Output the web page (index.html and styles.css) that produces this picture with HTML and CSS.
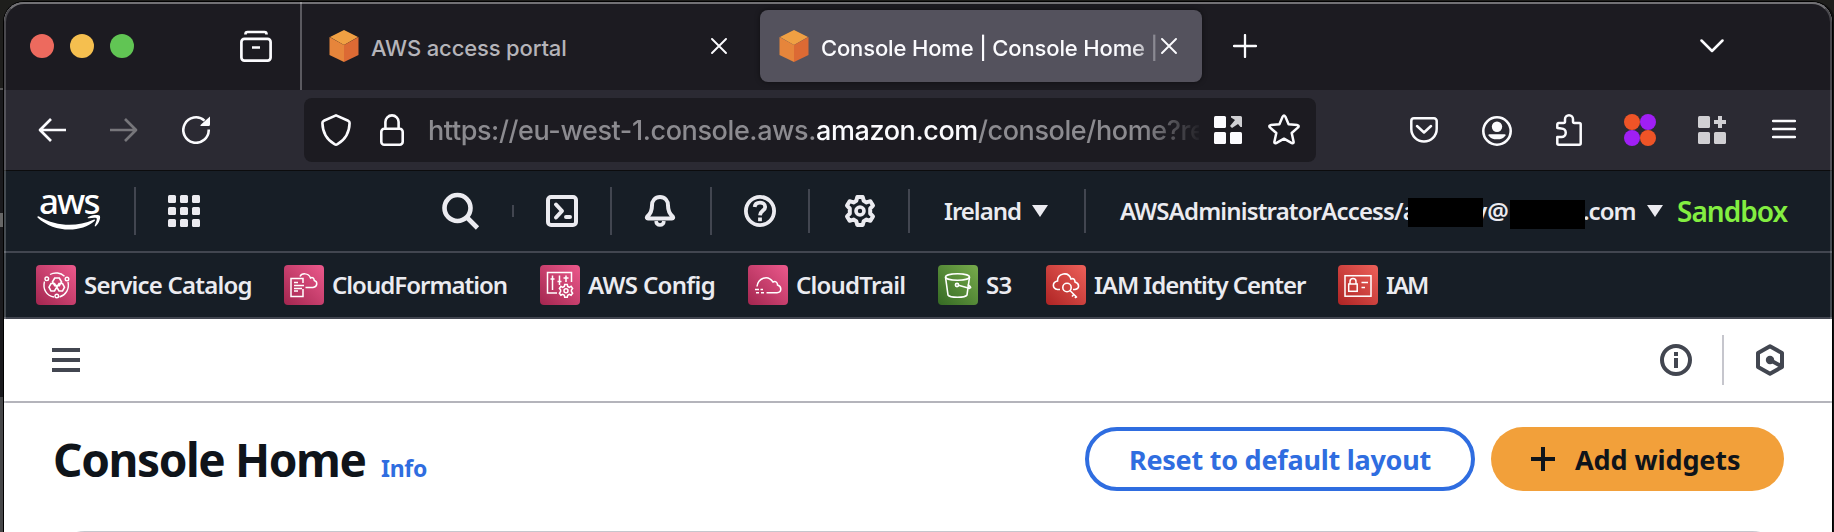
FILE: index.html
```html
<!DOCTYPE html>
<html lang="en">
<head>
<meta charset="utf-8">
<title>Console Home</title>
<link rel="stylesheet" href="styles.css">
</head>
<body>
<svg width="0" height="0" class="defs">
  <defs>
    <linearGradient id="pink" x1="0" y1="1" x2="1" y2="0"><stop offset="0" stop-color="#a3264f"/><stop offset="1" stop-color="#ec598c"/></linearGradient>
    <linearGradient id="green" x1="0" y1="1" x2="1" y2="0"><stop offset="0" stop-color="#356a24"/><stop offset="1" stop-color="#77ab4c"/></linearGradient>
    <linearGradient id="red" x1="0" y1="1" x2="1" y2="0"><stop offset="0" stop-color="#ae2424"/><stop offset="1" stop-color="#ed6059"/></linearGradient>
    <symbol id="cube" viewBox="0 0 32 32"><path fill="#f0a043" d="M16 0l14 7-14 8L2 7z"/><path fill="#e6853b" d="M1.500 7L16 15v17L1.500 25z"/><path fill="#dc6a34" d="M30.500 7L16 15v17l14.500-7z"/></symbol>
  </defs>
</svg>
<div class="desktop"></div>
<div class="window">
  <div class="tabbar">
    <div class="lights"><i class="light close"></i><i class="light min"></i><i class="light max"></i></div>
    <svg class="archive" width="32" height="32" viewBox="0 0 32 32" fill="none" stroke="#fbfbfe" stroke-width="2.700"><path d="M5.500 4.500V4a2 2 0 0 1 2-2h17a2 2 0 0 1 2 2v.5"/><rect x="1.400" y="8.900" width="29.200" height="21.700" rx="3"/><path d="M12 17.500h8"/></svg>
    <div class="tab-sep"></div>
    <div class="tab">
      <svg width="32" height="32"><use href="#cube"/></svg>
      <span class="tab-label">AWS access portal</span>
      <svg class="x" width="16" height="16" viewBox="0 0 16 16" stroke="#fbfbfe" stroke-width="1.900" stroke-linecap="round"><path d="M1 1l14 14M15 1L1 15"/></svg>
    </div>
    <div class="tab active">
      <svg width="32" height="32"><use href="#cube"/></svg>
      <span class="tab-label">Console Home | Console Home |</span>
      <svg class="x" width="16" height="16" viewBox="0 0 16 16" stroke="#fbfbfe" stroke-width="1.900" stroke-linecap="round"><path d="M1 1l14 14M15 1L1 15"/></svg>
    </div>
    <svg class="new-tab" width="24" height="24" viewBox="0 0 24 24" stroke="#fbfbfe" stroke-width="2.300" stroke-linecap="round"><path d="M12 1v22M1 12h22"/></svg>
    <svg class="tab-list" width="24" height="14" viewBox="0 0 24 14" fill="none" stroke="#fbfbfe" stroke-width="2.500" stroke-linecap="round" stroke-linejoin="round"><path d="M1.500 1.500L12 12 22.500 1.500"/></svg>
  </div>

  <div class="toolbar">
    <svg class="back" width="28" height="24" viewBox="0 0 28 24" fill="none" stroke="#fbfbfe" stroke-width="2.700" stroke-linejoin="round"><path d="M28 12H2M13 1L2 12l11 11"/></svg>
    <svg class="forward" width="28" height="24" viewBox="0 0 28 24" fill="none" stroke="#77767b" stroke-width="2.700" stroke-linejoin="round"><path d="M0 12h26M15 1l11 11-11 11"/></svg>
    <svg class="reload" width="28" height="28" viewBox="0 0 28 28" fill="none" stroke="#fbfbfe" stroke-width="2.600"><path d="M26.700 13.500A12.700 12.700 0 1 1 22.500 4.600"/><path fill="#fbfbfe" stroke="none" d="M28 .5V8.500a1.500 1.500 0 0 1-1.500 1.500H19.500q-2 0-.5-1.600z"/></svg>
    <div class="urlbar">
      <svg width="30" height="32" viewBox="0 0 30 32" fill="none" stroke="#fbfbfe" stroke-width="2.600" stroke-linejoin="round"><path d="M15 1.400L27.200 6.800Q28.600 7.500 28.600 9C28.400 18 24.500 25.500 16.500 30.200q-1.500.8-3 0C5.500 25.500 1.600 18 1.400 9q0-1.500 1.400-2.200z"/></svg>
      <svg class="lock" width="24" height="32" viewBox="0 0 24 32" fill="none" stroke="#fbfbfe" stroke-width="2.600"><path d="M5.400 15V8a6.600 6.600 0 0 1 13.200 0v7"/><rect x="1.300" y="14.800" width="21.400" height="15.900" rx="3"/></svg>
      <span class="url">https://eu-west-1.console.aws.<b>amazon.com</b>/console/home?re</span>
      <svg class="apps" width="28" height="28" viewBox="0 0 28 28" fill="#fbfbfe"><rect width="12" height="12" rx="1.500"/><rect y="16" width="12" height="12" rx="1.500"/><rect x="16" y="16" width="12" height="12" rx="1.500"/><path fill="#d0d0d3" d="M17 0h9.500A1.500 1.500 0 0 1 28 1.500V11h-1.500L24 8l-6 4-2-2 5-6-4-2.500z"/></svg>
      <svg class="star" width="32" height="32" viewBox="0 0 32 32" fill="none" stroke="#fbfbfe" stroke-width="2.500" stroke-linejoin="round"><path d="M14.700 2.600q1.300-2 2.600 0L20.600 10.200l8.700.9q2.200.5.800 2.300L23.700 19l1.900 8.700q.3 2.100-1.800 1.400L16 24.700l-7.800 4.400q-2.100.7-1.800-1.400L8.300 19l-6.400-5.600q-1.400-1.800.8-2.300l8.700-.9z"/></svg>
    </div>
    <div class="extensions">
      <svg width="28" height="26" viewBox="0 0 28 26" fill="none" stroke="#fbfbfe" stroke-width="2.500" stroke-linecap="round" stroke-linejoin="round"><path d="M4 1.300h20A2.700 2.700 0 0 1 26.700 4v8a12.700 12.500 0 0 1-25.400 0V4A2.700 2.700 0 0 1 4 1.300zM7 9l7 6.500L21 9"/></svg>
      <svg width="30" height="32" viewBox="0 0 30 32"><circle cx="15" cy="17" r="13.700" fill="none" stroke="#fbfbfe" stroke-width="2.600"/><circle cx="15" cy="12.700" r="5.200" fill="#fbfbfe"/><path fill="#fbfbfe" d="M7.500 20.200h15q1.500 0 1 1.300a9.500 7 0 0 1-17 0q-.5-1.300 1-1.300z"/></svg>
      <svg width="26" height="32" viewBox="0 0 26 32" fill="none" stroke="#fbfbfe" stroke-width="2.500" stroke-linejoin="round"><path d="M1.300 14V10.500A1.500 1.500 0 0 1 2.800 9H7.500Q9 9 9 7.500V5.300a4 4 0 0 1 8 0V7.500Q17 9 18.500 9h4.700a1.500 1.500 0 0 1 1.500 1.500V29.200a1.500 1.500 0 0 1-1.500 1.500H2.800a1.500 1.500 0 0 1-1.500-1.500V23H5.500a4 4 0 0 0 0-8.500z"/></svg>
      <svg width="32" height="32" viewBox="0 0 32 32"><circle cx="8" cy="8" r="8" fill="#ee5427"/><circle cx="24" cy="8" r="8" fill="#a01ff5"/><circle cx="8" cy="24" r="8" fill="#a01ff5"/><circle cx="24" cy="24" r="8" fill="#ee5427"/></svg>
      <svg width="28" height="28" viewBox="0 0 28 28" fill="#d0cfd3"><rect width="12" height="12" rx="1.500"/><rect y="16" width="12" height="12" rx="1.500"/><rect x="16" y="16" width="12" height="12" rx="1.500"/><path d="M20 0h4v4h4v4h-4v4h-4V8h-4V4h4z"/></svg>
      <svg width="24" height="22" viewBox="0 0 24 22" stroke="#fbfbfe" stroke-width="2.400" stroke-linecap="round"><path d="M1 2h22M1 10h22M1 18h22"/></svg>
    </div>
  </div>

  <div class="aws-nav">
    <div class="logo"><span>aws</span>
      <svg width="64" height="16" viewBox="0 0 64 16" fill="#fff"><path d="M.5 1.500Q1 .8 2 1.500C20 12 40 12 56.500 4.800q2.500-.7 1 1.200C44 18 17 18 .5 2.500z"/><path d="M51 2.300C55-.5 61-.6 62.800.8 64 3 61.500 9.500 58.600 11.300q-1.200.4-.8-.8C59 7 60.300 4 59.600 3.200 58 2.300 55 3 51.700 3.300q-1.700 0-.7-1z"/></svg>
    </div>
    <i class="vr tall v1"></i>
    <svg class="grid" width="32" height="32" viewBox="0 0 32 32" fill="#ebebf0"><rect width="8" height="8" rx="1.500"/><rect x="12" width="8" height="8" rx="1.500"/><rect x="24" width="8" height="8" rx="1.500"/><rect y="12" width="8" height="8" rx="1.500"/><rect x="12" y="12" width="8" height="8" rx="1.500"/><rect x="24" y="12" width="8" height="8" rx="1.500"/><rect y="24" width="8" height="8" rx="1.500"/><rect x="12" y="24" width="8" height="8" rx="1.500"/><rect x="24" y="24" width="8" height="8" rx="1.500"/></svg>
    <svg class="search" width="38" height="38" viewBox="0 0 38 38" fill="none" stroke="#ebebf0" stroke-width="4.600"><circle cx="15.500" cy="16" r="13"/><path d="M25 25.500L35.500 36"/></svg>
    <i class="vr dot v2"></i>
    <svg class="term" width="32" height="32" viewBox="0 0 32 32" fill="none" stroke="#ebebf0" stroke-width="4" stroke-linejoin="round"><rect x="2" y="2" width="28" height="28" rx="3"/><path stroke-linecap="round" d="M10 9.500l6 6.500-6 6.500M20 22h4"/></svg>
    <i class="vr tall v3"></i>
    <svg class="bell" width="32" height="32" viewBox="0 0 32 32" fill="none" stroke="#ebebf0" stroke-width="4" stroke-linejoin="round"><path d="M16 2c-5 0-8 3.800-8 8.500 0 5-1.500 8.500-4.800 11-.8 1.200-.3 2 .8 2h24c1.100 0 1.600-.8.800-2C25.500 19 24 15.500 24 10.500 24 5.800 21 2 16 2z"/><path stroke-width="3.500" d="M12 26c.5 5.200 7.500 5.200 8 0"/></svg>
    <i class="vr tall v4"></i>
    <svg class="help" width="32" height="32" viewBox="0 0 32 32" fill="none" stroke="#ebebf0" stroke-width="3.800"><circle cx="16" cy="16" r="14.100"/><path d="M10.700 12c.2-3 2.400-4.300 5.300-4.300s5.200 1.400 5.200 4.200c0 3.800-5 3.600-5.200 8.500M16 22.500v3.800"/></svg>
    <i class="vr v5"></i>
    <svg class="gear" width="32" height="32" viewBox="0 0 32 32" fill="none" stroke="#ebebf0" stroke-width="4" stroke-linejoin="round"><path d="M13.300 2h5.400l1 3.800 2.800 1.600 3.900-1.200 2.600 4.400-2.800 2.900v5l2.800 2.900-2.600 4.400-3.900-1.200-2.800 1.600-1 3.800h-5.400l-1-3.800-2.800-1.600-3.900 1.200L3 21.400l2.800-2.900v-5L3 10.600l2.600-4.400 3.900 1.200 2.800-1.600z"/><circle cx="16" cy="16" r="4" stroke-width="3.600"/></svg>
    <i class="vr v6"></i>
    <span class="nav-text region">Ireland</span><i class="caret c1"></i>
    <i class="vr v7"></i>
    <span class="nav-text account">AWSAdministratorAccess/a</span>
    <span class="redacted user"></span>
    <span class="nav-text at">y@</span>
    <span class="redacted domain"></span>
    <span class="nav-text com">.com</span><i class="caret c2"></i>
    <span class="sandbox">Sandbox</span>
  </div>

  <div class="services">
    <a class="svc s1"><svg width="40" height="40" viewBox="0 0 40 40" fill="none" stroke="#fff" stroke-width="1.400"><rect width="40" height="40" rx="4" fill="url(#pink)" stroke="none"/><path d="M14 9.500a12.500 12.500 0 0 1 14.500 1.800M32 17c1.500 7-2 13-8.500 15M18 32C10.500 31 6.500 24 8.500 16.500"/><circle cx="10.800" cy="13.800" r="1.800"/><circle cx="31" cy="14" r="1.800"/><circle cx="20.800" cy="31" r="1.800"/><path stroke-width="1.600" d="M18.700 13h4.600l2.200 3.800-2.200 3.800h-4.600l-2.200-3.800zM15 18.500h3.500l2.300 3.700-2.300 3.800H15l-2-3.800zM23 18.500h3.500l2 3.700-2 3.800H23l-2.200-3.800z"/></svg><span>Service Catalog</span></a>
    <a class="svc s2"><svg width="40" height="40" viewBox="0 0 40 40" fill="none" stroke="#fff" stroke-width="1.500"><rect width="40" height="40" rx="4" fill="url(#pink)" stroke="none"/><path d="M19 18v-4.500H7V31.500h12V24M10 17.500h4M10 20.500h10M10 23.500h8M10 26h4"/><path d="M16 11.500c1.500-3.500 8.500-4 10.500 1.500 2-1.200 3.500 0 3.800 2.500 3.500 1 3.500 6.500-1.300 7H21.500"/></svg><span>CloudFormation</span></a>
    <a class="svc s3"><svg width="40" height="40" viewBox="0 0 40 40" fill="none" stroke="#fff" stroke-width="1.500"><rect width="40" height="40" rx="4" fill="url(#pink)" stroke="none"/><path d="M17 28H7.500V7.500h24V17M12.500 10.500V25M10.500 14h4M19.500 10.500V20M17.500 16.500h4M26 10.500V17M23.500 13h5"/><path d="M24.700 19.500h2.600l.4 2 1.700.8 1.700-1 1.500 2.200-1.200 1.500v1.500l1.200 1.700-1.500 2-1.700-.8-1.700.8-.4 2h-2.600l-.4-2-1.700-.8-1.700.8-1.500-2 1.200-1.700V25l-1.200-1.500 1.500-2.200 1.700 1 1.700-.8z"/><circle cx="26" cy="25.700" r="2"/></svg><span>AWS Config</span></a>
    <a class="svc s4"><svg width="40" height="40" viewBox="0 0 40 40" fill="none" stroke="#fff" stroke-width="1.500"><rect width="40" height="40" rx="4" fill="url(#pink)" stroke="none"/><path d="M9 21.500C10 13.500 19.500 9 25 17c2.500-1.500 4.500.5 4.500 3 4.500 1.500 4.500 7.500-.5 7.700H18.500M7 24.500h4M12.500 24.500H15M8 27.700h3M13 27.700h3"/></svg><span>CloudTrail</span></a>
    <a class="svc s5"><svg width="40" height="40" viewBox="0 0 40 40" fill="none" stroke="#fff" stroke-width="1.600"><rect width="40" height="40" rx="4" fill="url(#green)" stroke="none"/><ellipse cx="19.500" cy="12" rx="12" ry="3.300"/><path d="M7.500 12l2.500 18c2 3 17 3 19 0l2.500-18M20.500 20.300L32 23.500M29.500 19.500c4 2.500 4.500 4 0 3.300"/><circle cx="19" cy="20" r="1.600"/></svg><span>S3</span></a>
    <a class="svc s6"><svg width="40" height="40" viewBox="0 0 40 40" fill="none" stroke="#fff" stroke-width="1.600"><rect width="40" height="40" rx="4" fill="url(#red)" stroke="none"/><path d="M14 24.500H11.500C6 23.500 6 17 11.500 16c0-8 11-10 13.500-2 2.500-1 4 .5 4 3 4.500 1.500 5 6.500 0 7.500H27"/><circle cx="21" cy="22.500" r="4.200"/><path d="M24 25.500l7 7M26 31.500l2-2.200M29 33l1.500-2"/></svg><span>IAM Identity Center</span></a>
    <a class="svc s7"><svg width="40" height="40" viewBox="0 0 40 40" fill="none" stroke="#fff" stroke-width="1.500"><rect width="40" height="40" rx="4" fill="url(#red)" stroke="none"/><rect x="7" y="10.700" width="26" height="20.500"/><rect x="10.700" y="19" width="8.500" height="7.300"/><path d="M12 19v-2.500a3 3 0 0 1 6 0V19M23.500 17.500H30M23.500 22.500h3.500"/></svg><span>IAM</span></a>
  </div>

  <div class="subbar">
    <svg width="28" height="24" viewBox="0 0 28 24" fill="#424650"><path d="M0 0h28v4H0zM0 10h28v4H0zM0 20h28v4H0z"/></svg>
    <svg class="info-icon" width="32" height="32" viewBox="0 0 32 32" fill="#424650"><circle cx="16" cy="16" r="14" fill="none" stroke="#424650" stroke-width="4"/><path d="M14 8h4v4h-4zM14 14h4v10h-4z"/></svg>
    <i class="sub-vr"></i>
    <svg class="hex" width="32" height="32" viewBox="0 0 32 32" fill="none" stroke="#424650" stroke-width="4" stroke-linejoin="round"><path d="M16 2.300L28 9v14l-12 6.700L4 23V9z"/><circle cx="16" cy="16" r="4.200" fill="#424650" stroke="none"/><path d="M16 16l11 6"/></svg>
  </div>

  <div class="page">
    <div class="page-head">
      <h1>Console Home</h1><a class="info">Info</a>
      <button class="btn outline"><span>Reset to default layout</span></button>
      <button class="btn primary"><svg width="24" height="24" viewBox="0 0 24 24" fill="#0f141a"><path d="M10 0h4v10h10v4H14v10h-4V14H0v-4h10z"/></svg><span>Add widgets</span></button>
    </div>
    <div class="card"></div>
  </div>
</div>
</body>
</html>
```

FILE: styles.css
```css
* { box-sizing: border-box; }
body {
  margin: 0; width: 1834px; height: 532px; overflow: hidden;
  display: flex; background: #1e1e1c;
  font-family: "Noto Sans", "Open Sans", sans-serif;
}
svg { display: block; flex: none; }
i { display: block; flex: none; }
.defs { position: absolute; }
.desktop {
  width: 4px; flex: none;
  background: linear-gradient(#1e1e1c 0 88px, #555 88px 90px, #1a1a1d 90px 213px, #666 213px 227px, #1a1a1d 227px 397px, #464749 397px);
}
.window {
  position: relative; width: 1828px; height: 530px; margin-top: 2px; flex: none;
  border-radius: 20px 20px 0 0; overflow: hidden; background: #fff;
  box-shadow: 0 0 0 1px #000, 3px 0 0 #111;
}
.window::after {
  content: ""; position: absolute; top: 0; left: 0; right: 0; bottom: 0;
  border: 2px solid rgba(255,255,255,.2); border-top-color: rgba(255,255,255,.38); border-bottom: 0;
  border-radius: 20px 20px 0 0; pointer-events: none;
}

/* Tab strip */
.tabbar { height: 88px; background: #1c1b21; display: flex; align-items: center; padding-left: 26px; }
.lights { display: flex; gap: 16px; }
.light { width: 24px; height: 24px; border-radius: 50%; }
.close { background: #ed6a5e; }
.min { background: #f5bf4f; }
.max { background: #61c554; }
.archive { margin-left: 106px; }
.tab-sep { width: 2px; height: 88px; margin-left: 28px; background: #5b5a60; }
.tab { width: 458px; height: 72px; display: flex; align-items: center; padding-left: 26px; font: 500 22px/30px Inter, sans-serif; letter-spacing: -.15px; color: #b5b4b9; }
.tab-label { width: 339px; margin-left: 11px; padding-top: 3px; white-space: nowrap; overflow: hidden; }
.tab .x { margin-left: 1px; }
.tab.active { width: 442px; padding-left: 18px; border-radius: 8px; background: #54525d; color: #fbfbfe; box-shadow: 0 0 5px rgba(0,0,0,.5); }
.active .tab-label { -webkit-mask-image: linear-gradient(to right, #000 310px, transparent 345px); mask-image: linear-gradient(to right, #000 310px, transparent 345px); }
.new-tab { margin-left: 31px; }
.tab-list { margin-left: 443px; }

/* Address row */
.toolbar { height: 81px; background: #2b2a33; border-bottom: 1px solid #0c0c0d; display: flex; align-items: center; padding-left: 34px; }
.forward { margin-left: 44px; }
.reload { margin-left: 44px; }
.urlbar { width: 1012px; height: 64px; margin-left: 94px; border-radius: 8px; background: #1c1b21; display: flex; align-items: center; padding-left: 17px; }
.lock { margin-left: 29px; }
.url {
  width: 771px; margin-left: 24px; padding-top: 2px; overflow: hidden; white-space: nowrap;
  font: 450 27px/40px Inter, sans-serif; letter-spacing: -.4px; color: #8c8b90;
  -webkit-mask-image: linear-gradient(to right, #000 715px, transparent 775px);
  mask-image: linear-gradient(to right, #000 715px, transparent 775px);
}
.url b { font-weight: 450; color: #fbfbfe; }
.apps { margin-left: 15px; }
.star { margin-left: 26px; }
.extensions { display: flex; align-items: center; margin-left: 94px; }
.extensions svg:nth-child(2) { margin-left: 44px; }
.extensions svg:nth-child(3) { margin-left: 44px; }
.extensions svg:nth-child(4) { margin-left: 42px; }
.extensions svg:nth-child(5) { margin-left: 42px; }
.extensions svg:nth-child(6) { margin-left: 46px; }

/* AWS navigation */
.aws-nav { height: 82px; background: #171e26; border-bottom: 2px solid #424650; display: flex; align-items: center; padding-left: 33px; }
.logo { width: 64px; height: 40px; color: #fff; display: flex; flex-direction: column; }
.logo span { font: 500 35px/20px "Noto Sans", sans-serif; padding-left: 2px; height: 25px; letter-spacing: -1.900px; }
.vr { width: 2px; height: 44px; background: #424650; }
.vr.tall { height: 48px; }
.vr.dot { height: 12px; }
.v1 { margin-left: 33px; }
.grid { margin-left: 32px; }
.search { margin-left: 242px; }
.v2 { margin-left: 32px; }
.term, .bell, .help, .v3, .v5, .v6 { margin-left: 32px; }
.v4, .gear { margin-left: 34px; }
.nav-text { font-size: 24px; line-height: 34px; font-weight: 600; color: #ebebf0; white-space: nowrap; flex: none; }
.region { width: 74px; margin-left: 34px; letter-spacing: -1px; }
.caret { width: 0; height: 0; border: 8px solid transparent; border-top: 12px solid #ebebf0; border-bottom: 0; }
.c1 { margin-left: 14px; }
.v7 { margin-left: 36px; }
.account { width: 288px; margin-left: 34px; letter-spacing: -.85px; }
.redacted { position: relative; z-index: 1; width: 75px; height: 29px; background: #000; flex: none; }
.user { margin-top: 3px; }
.at { width: 36px; margin-left: -9px; letter-spacing: 0; }
.domain { margin-top: 7px; }
.com { width: 50px; margin-left: -2px; letter-spacing: -1px; }
.c2 { margin-left: 14px; }
.sandbox { margin-left: 14px; font-size: 28px; line-height: 36px; font-weight: 600; letter-spacing: -1px; color: #83ee41; }

/* Favourite services */
.services { height: 66px; background: #171e26; border-bottom: 2px solid #424650; display: flex; align-items: center; padding-left: 32px; gap: 32px; }
.svc { display: flex; align-items: center; gap: 8px; flex: none; font-size: 24px; line-height: 34px; font-weight: 600; color: #ebebf0; white-space: nowrap; letter-spacing: -.8px; }
.s1 { width: 216px; }
.s2 { width: 224px; letter-spacing: -1px; }
.s3 { width: 176px; letter-spacing: -.65px; }
.s4 { width: 158px; }
.s5 { width: 76px; }
.s6 { width: 260px; letter-spacing: -1.050px; }
.s7 { letter-spacing: -2px; }

/* Page */
.subbar { height: 84px; border-bottom: 2px solid #b4b4bb; display: flex; align-items: center; padding-left: 48px; }
.info-icon { margin-left: 1580px; }
.sub-vr { width: 2px; height: 50px; margin-left: 30px; background: #c6c6cd; }
.hex { margin-left: 30px; }
.page { padding: 24px 48px 0 49px; }
.page-head { height: 64px; display: flex; align-items: center; }
h1 { margin: 0; width: 329px; font-size: 46px; line-height: 64px; font-weight: 700; letter-spacing: -1.400px; color: #0f141a; white-space: nowrap; }
.info { font-size: 23px; line-height: 32px; font-weight: 700; color: #2f6de0; letter-spacing: -.3px; padding-top: 18px; width: 704px; flex: none; }
.btn { height: 64px; border-radius: 32px; display: flex; align-items: center; padding: 0; flex: none; font: 700 27px/36px "Noto Sans", sans-serif; white-space: nowrap; letter-spacing: -.25px; }
.btn span { padding-top: 2px; }
.outline { width: 390px; border: 4px solid #2f6de0; background: #fff; color: #2f6de0; justify-content: center; }
.primary { width: 293px; margin-left: 16px; border: 0; background: #f2a03a; color: #0f141a; padding-left: 40px; gap: 20px; letter-spacing: -.1px; }
.card { height: 80px; margin: 40px 0 0 0; border: 2px solid #c6c6cd; border-radius: 32px; }
```
